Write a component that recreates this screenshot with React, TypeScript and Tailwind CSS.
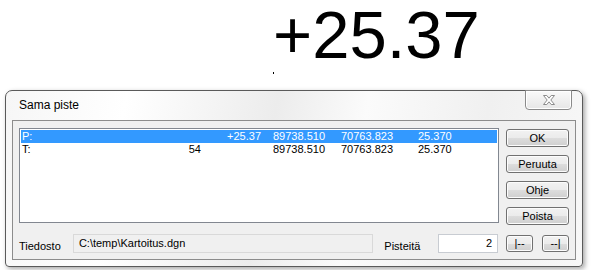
import * as React from "react";

interface Row {
  label: string;
  count: string;
  delta: string;
  x: string;
  y: string;
  z: string;
  selected?: boolean;
}

const rows: Row[] = [
  { label: "P:", count: "", delta: "+25.37", x: "89738.510", y: "70763.823", z: "25.370", selected: true },
  { label: "T:", count: "54", delta: "", x: "89738.510", y: "70763.823", z: "25.370" },
];

const btn =
  "flex items-center justify-center rounded-[3px] border border-[#707070] bg-[linear-gradient(#f2f2f2_0%,#ebebeb_50%,#dddddd_50%,#cfcfcf_100%)] shadow-[inset_0_0_0_1px_#fcfcfc] text-[11px] leading-[13px] text-black";

export default function App() {
  return (
    <div className="w-[592px] h-[270px] overflow-hidden bg-white font-['Liberation_Sans',Arial,sans-serif] text-black">
      {/* big readout */}
      <div className="-mt-[3px] pl-[273px] h-[75px] text-[67px] leading-[75px]">+25.37</div>
      <div className="ml-[273px] w-[1px] h-[2px] bg-black" />

      {/* dialog window */}
      <div className="ml-[5px] mt-[16px] w-[578px] h-[177px] rounded-t-[7px] rounded-b-[4px] border border-[#5a5a5a] bg-[linear-gradient(100deg,#f6f6f6_0%,#ffffff_20%,#ececec_45%,#fbfbfb_60%,#f0f0f0_80%,#f8f8f8_100%)] shadow-[2px_2px_5px_rgba(0,0,0,0.35)] px-[6px] flex flex-col">
        <div className="h-[29px] flex items-start">
          <div className="pl-[7px] pt-[7px] text-[12px] leading-[15px]">Sama piste</div>
          <div className="ml-auto mr-[4px] -mt-[1px] w-[47px] h-[20px] rounded-b-[4px] border border-[#8a8a8a] bg-[linear-gradient(#fafafa,#e6e6e6)] shadow-[inset_0_0_0_1px_#ffffff] flex items-center justify-center">
            <svg width="14" height="12" viewBox="0 0 14 12">
              <path
                d="M1.5 1.5 H4.8 L7 4.2 L9.2 1.5 H12.5 L8.8 6 L12.5 10.5 H9.2 L7 7.8 L4.8 10.5 H1.5 L5.2 6 Z"
                fill="#ffffff"
                stroke="#8c8c8c"
                strokeWidth="1"
                strokeLinejoin="round"
              />
            </svg>
          </div>
        </div>

        {/* client area */}
        <div className="h-[140px] border border-[#8c8c8c] bg-[#f0f0f0] pt-[7px] px-[6px]">
          <div className="flex">
            <div className="w-[480px] h-[95px] border border-[#828790] bg-white p-[1px]">
              {rows.map((r) => (
                <div
                  key={r.label}
                  className={`flex h-[13px] text-[11px] leading-[13px] whitespace-nowrap ${
                    r.selected ? "bg-[#3399ff] text-white" : ""
                  }`}
                >
                  <span className="w-[120px] pl-[1px]">{r.label}</span>
                  <span className="w-[60px] text-right">{r.count}</span>
                  <span className="w-[60px] text-right">{r.delta}</span>
                  <span className="ml-[12px] w-[68px]">{r.x}</span>
                  <span className="w-[77px]">{r.y}</span>
                  <span>{r.z}</span>
                </div>
              ))}
            </div>
            <div className="ml-[7px] mt-[1px] flex flex-col gap-[8px]">
              <button className={`${btn} w-[63px] h-[18px]`}>OK</button>
              <button className={`${btn} w-[63px] h-[18px]`}>Peruuta</button>
              <button className={`${btn} w-[63px] h-[18px]`}>Ohje</button>
              <button className={`${btn} w-[63px] h-[18px]`}>Poista</button>
            </div>
          </div>

          <div className="mt-[9px] flex items-start text-[11px] leading-[13px]">
            <span className="w-[54px] mt-[6px]">Tiedosto</span>
            <div className="w-[301px] h-[19px] border border-[#d9d9d9] bg-[#f0f0f0] pl-[5px] pt-[2px]">
              C:\temp\Kartoitus.dgn
            </div>
            <span className="ml-[11px] w-[54px] mt-[6px]">Pisteitä</span>
            <div className="w-[60px] h-[19px] border border-[#c8ccd2] bg-white pr-[5px] pt-[2px] text-right">
              2
            </div>
            <button className={`${btn} ml-[8px] mt-[1px] w-[27px] h-[17px] text-[#1a2a50]`}>|--</button>
            <button className={`${btn} ml-[9px] mt-[1px] w-[27px] h-[17px] text-[#1a2a50]`}>--|</button>
          </div>
        </div>
      </div>
    </div>
  );
}
